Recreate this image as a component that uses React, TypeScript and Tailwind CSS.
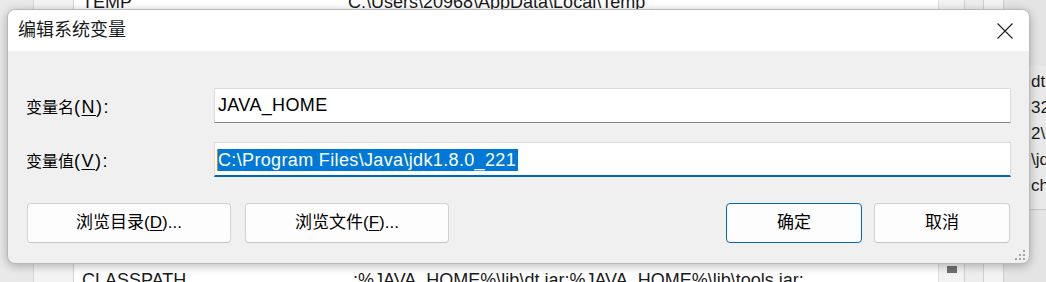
import React from 'react';

const font = "font-['Liberation_Sans','Noto_Sans_CJK_SC',sans-serif]";

const sideRows = ['dt', '32', '2\\D', '\\jd', 'ch'];

const Background: React.FC = () => (
  <div className={`flex h-full w-full bg-[#f0f0f0] ${font} text-[18px] text-[#1a1a1a]`}>
    <div className="w-[34px] shrink-0 border-r border-[#d6d6d6] bg-[#e9e9e9]" />
    <div className="w-[40px] shrink-0 border-r border-[#d2d2d2] bg-[#f3f3f3]" />
    {/* variable list */}
    <div className="-mt-[10px] flex h-[302px] w-[864px] shrink-0 flex-col justify-between bg-white">
      <div className="flex h-[24px] items-center leading-[24px]">
        <span className="w-[274px] shrink-0 pl-[8px]">TEMP</span>
        <span>C:\Users\20968\AppData\Local\Temp</span>
      </div>
      <div className="flex h-[24px] items-center leading-[24px]">
        <span className="w-[274px] shrink-0 pl-[8px]">CLASSPATH</span>
        <span>.;%JAVA_HOME%\lib\dt.jar;%JAVA_HOME%\lib\tools.jar;</span>
      </div>
    </div>
    {/* scrollbar */}
    <div className="flex w-[26px] shrink-0 flex-col justify-end border-l border-[#dedede] bg-[#f3f3f3] pb-[9px] pl-[8px]">
      <div className="h-[7px] w-[10px] bg-[#6e6e6e]" />
    </div>
    <div className="w-[19px] shrink-0 border-l border-[#d0d0d0] bg-[#ededed]" />
    <div className="w-[20px] shrink-0 border-l border-[#d0d0d0] bg-[#f3f3f3]" />
    <div className="flex flex-1 flex-col border-l border-[#cfcfcf] bg-[#e4e4e4] pt-[66px]">
      <div className="flex h-[144px] flex-col gap-[2px] border-b border-[#c8c8c8] bg-[#e9e9e9] pl-[27px] pt-[4px] text-[17px] leading-[24px]">
        {sideRows.map((t) => (
          <span key={t}>{t}</span>
        ))}
      </div>
    </div>
  </div>
);

const Label: React.FC<{ cjk: string; hot: string }> = ({ cjk, hot }) => (
  <div className="w-[188px] shrink-0 pt-[3px] text-[16px] text-black">
    <span>{cjk}</span>
    <span className="text-[18px] tracking-[1.5px]">
      (<u className="underline-offset-[2px]">{hot}</u>):
    </span>
  </div>
);

const Button: React.FC<{ children: React.ReactNode; primary?: boolean; wide?: boolean }> = ({
  children,
  primary,
  wide,
}) => (
  <button
    className={`flex h-[40px] items-center justify-center rounded-[4px] border bg-[#fdfdfd] text-[17px] text-black ${
      wide ? 'w-[204px]' : 'w-[136px]'
    } ${primary ? 'border-[#0067c0]' : 'border-[#d1d1d1] border-b-[#c4c4c4]'}`}
  >
    {children}
  </button>
);

export default function App() {
  return (
    <div className="relative h-[282px] w-[1046px] overflow-hidden">
      <Background />

      {/* dialog window */}
      <div
        className={`absolute left-[7px] top-[9px] flex h-[255px] w-[1023px] flex-col overflow-hidden rounded-[8px] border border-[#b9b9b9] bg-[#f0f0f0] shadow-[0_2px_10px_rgba(0,0,0,0.28)] ${font}`}
      >
        <div className="flex h-[41px] shrink-0 items-center justify-between bg-white pl-[10px] pr-[16px]">
          <span className="text-[18px] text-[#1a1a1a]">编辑系统变量</span>
          <svg width="16" height="16" viewBox="0 0 16 16" className="mt-[1px]">
            <path d="M0.5 0.5 L15.5 15.5 M15.5 0.5 L0.5 15.5" stroke="#1f1f1f" strokeWidth="1.1" />
          </svg>
        </div>

        <div className="flex flex-1 flex-col px-[18px] pt-[37px]">
          <div className="flex items-center">
            <Label cjk="变量名" hot="N" />
            <div className="flex h-[35px] flex-1 items-center border border-[#dcdcdc] border-b-[#868686] bg-white pl-[3px] text-[18px] tracking-[0.35px] text-black">
              JAVA_HOME
            </div>
          </div>

          <div className="mt-[19px] flex items-center">
            <Label cjk="变量值" hot="V" />
            <div className="flex h-[35px] flex-1 items-center border border-[#dcdcdc] border-b-2 border-b-[#0067c0] bg-white pl-[2px] pt-[1px] text-[18px] tracking-[0.35px]">
              <span className="h-[22px] w-[1px] bg-[#d8802a]" />
              <span className="bg-[#0078d7] pr-[2px] leading-[22px] text-white">
                C:\Program Files\Java\jdk1.8.0_221
              </span>
            </div>
          </div>

          <div className="mt-[26px] flex items-center pl-[1px] pr-[1px]">
            <Button wide>
              浏览目录(<u className="underline-offset-[2px]">D</u>)...
            </Button>
            <div className="ml-[14px]">
              <Button wide>
                浏览文件(<u className="underline-offset-[2px]">F</u>)...
              </Button>
            </div>
            <div className="ml-auto flex gap-[12px]">
              <Button primary>确定</Button>
              <Button>取消</Button>
            </div>
          </div>
        </div>

        {/* resize grip */}
        <div className="absolute bottom-[3px] right-[4px] grid grid-cols-3 gap-[2px]">
          <span className="h-[2px] w-[2px]" />
          <span className="h-[2px] w-[2px]" />
          <span className="h-[2px] w-[2px] bg-[#a6a6a6]" />
          <span className="h-[2px] w-[2px]" />
          <span className="h-[2px] w-[2px] bg-[#a6a6a6]" />
          <span className="h-[2px] w-[2px] bg-[#a6a6a6]" />
          <span className="h-[2px] w-[2px] bg-[#a6a6a6]" />
          <span className="h-[2px] w-[2px] bg-[#a6a6a6]" />
          <span className="h-[2px] w-[2px] bg-[#a6a6a6]" />
        </div>
      </div>
    </div>
  );
}
